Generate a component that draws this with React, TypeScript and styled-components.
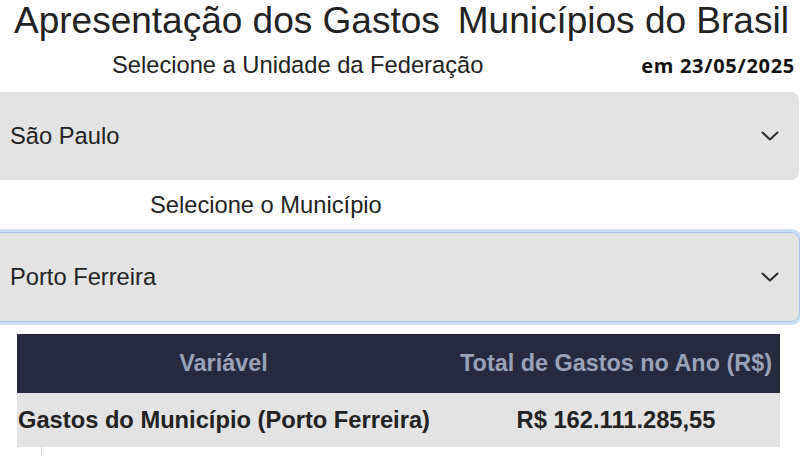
import React from "react";
import styled, { createGlobalStyle } from "styled-components";

const GlobalStyle = createGlobalStyle`
  html, body {
    margin: 0;
    padding: 0;
    background: #ffffff;
  }
  body {
    font-family: "Liberation Sans", Arial, sans-serif;
    color: #222222;
    overflow: hidden;
  }
`;

const Chevron = () => (
  <svg width="18" height="10" viewBox="0 0 18 10" fill="none">
    <polyline
      points="1.5,1.5 9,8.5 16.5,1.5"
      stroke="#2b2b2b"
      strokeWidth="2"
      strokeLinecap="round"
      strokeLinejoin="round"
    />
  </svg>
);

interface ISelectProps {
  value: string;
  focused?: boolean;
}

const Select = ({ value, focused }: ISelectProps) => (
  <SelectBox $focused={focused}>
    <span>{value}</span>
    <Chevron />
  </SelectBox>
);

const App = () => {
  return (
    <Page>
      <GlobalStyle />
      <TitleRow>
        <Title>Apresentação dos Gastos</Title>
        <Title>Municípios do Brasil</Title>
      </TitleRow>
      <SubRow>
        <Label>Selecione a Unidade da Federação</Label>
        <DateText>em 23/05/2025</DateText>
      </SubRow>
      <Select value="São Paulo" />
      <MunicipioLabel>Selecione o Município</MunicipioLabel>
      <Select value="Porto Ferreira" focused />
      <Table>
        <HeadCell>Variável</HeadCell>
        <HeadCell $right>Total de Gastos no Ano (R$)</HeadCell>
        <BodyCell>Gastos do Município (Porto Ferreira)</BodyCell>
        <BodyCell $right>R$ 162.111.285,55</BodyCell>
      </Table>
      <Tail />
    </Page>
  );
};

export default App;

const Page = styled.div`
  width: 800px;
  display: flex;
  flex-direction: column;

  & > * {
    flex-shrink: 0;
  }
`;

const TitleRow = styled.div`
  display: flex;
  gap: 18px;
  padding-left: 14px;
`;

const Title = styled.h1`
  margin: 0;
  font-size: 37px;
  font-weight: 400;
  line-height: normal;
  color: #222222;
`;

const SubRow = styled.div`
  display: flex;
  align-items: baseline;
  justify-content: space-between;
  margin-top: 10px;
  padding: 0 5px 0 112px;
`;

const Label = styled.div`
  font-size: 23.7px;
  color: #222222;
`;

const DateText = styled.div`
  font-family: "Open Sans", "Liberation Sans", sans-serif;
  font-weight: 700;
  font-size: 20px;
  letter-spacing: 0.7px;
  color: #111111;
`;

const SelectBox = styled.div<{ $focused?: boolean }>`
  box-sizing: border-box;
  height: 88px;
  margin-top: ${(p) => (p.$focused ? "14px" : "13px")};
  width: 799px;
  display: flex;
  align-items: center;
  justify-content: space-between;
  padding: 0 20px 0 10px;
  background: #e3e3e3;
  border-radius: 0 8px 8px 0;
  font-size: 23.7px;
  color: #222222;
  box-shadow: ${(p) =>
    p.$focused ? "0 0 0 1px #a9c1e4, 0 0 0 4px #cddff7" : "none"};
`;

const MunicipioLabel = styled.div`
  margin-top: 12px;
  padding-left: 150px;
  font-size: 23.7px;
  color: #222222;
`;

const Table = styled.div`
  margin: 13px 0 0 17px;
  width: 763px;
  display: grid;
  grid-template-columns: 413px 350px;
  grid-template-rows: 59px 54px;
`;

const HeadCell = styled.div<{ $right?: boolean }>`
  display: flex;
  align-items: center;
  justify-content: center;
  padding-left: ${(p) => (p.$right ? "22px" : "0")};
  background: #272a3f;
  color: #9aa2b8;
  font-size: 23.4px;
  font-weight: 700;
  white-space: nowrap;
`;

const BodyCell = styled.div<{ $right?: boolean }>`
  display: flex;
  align-items: center;
  justify-content: ${(p) => (p.$right ? "center" : "flex-start")};
  padding-left: ${(p) => (p.$right ? "22px" : "1px")};
  background: #e3e3e3;
  color: #222222;
  font-size: 23.7px;
  font-weight: 700;
  white-space: nowrap;
`;

const Tail = styled.div`
  margin-left: 41px;
  height: 12px;
  border-left: 1px solid #d6d6d6;
`;
